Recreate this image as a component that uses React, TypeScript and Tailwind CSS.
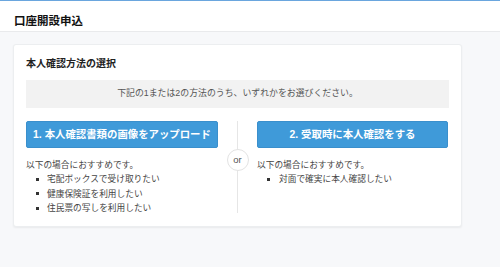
export default function App() {
  const left = ["宅配ボックスで受け取りたい", "健康保険証を利用したい", "住民票の写しを利用したい"]
  const right = ["対面で確実に本人確認したい"]

  return (
    <div
      className="min-h-[267px] bg-[#f7f8fa] text-[#333]"
      style={{ fontFamily: '"Helvetica Neue", "Liberation Sans", "Noto Sans CJK JP", sans-serif' }}
    >
      <div className="h-px bg-[#6aa6de]" />
      <header className="h-[31px] bg-white border-b border-[#e9eaec] pl-[14px] pt-[13px]">
        <h1 className="text-[11.5px] leading-[14px] font-bold text-[#111]">口座開設申込</h1>
      </header>

      <main className="pl-[13px] pt-[12px]">
        <section className="w-[449px] bg-white rounded-[3px] border border-[#eceef0] shadow-[0_1px_2px_rgba(0,0,0,0.06)] px-[12px] pt-[12px] pb-[11px]">
          <h2 className="text-[10px] leading-[14px] font-bold text-[#222] mb-[9px]">本人確認方法の選択</h2>

          <div className="h-[28px] bg-[#f2f2f2] flex items-center justify-center text-[8.9px] text-[#555]">
            下記の1または2の方法のうち、いずれかをお選びください。
          </div>

          <div className="mt-[13px] grid grid-cols-[192px_39px_191px]">
            <div>
              <button className="w-full h-[27px] rounded-[2px] bg-[#3f9ad9] border border-[#3a8fcc] text-white text-[10.4px] font-bold">
                1. 本人確認書類の画像をアップロード
              </button>
              <p className="mt-[10px] text-[8.7px] leading-[14px] text-[#444]">以下の場合におすすめです。</p>
              <ul className="text-[8.7px] leading-[14.3px] text-[#444]">
                {left.map(t => (
                  <li key={t} className="flex items-center">
                    <span className="w-[3px] h-[3px] bg-[#333] ml-[10px] mr-[8px]" />
                    {t}
                  </li>
                ))}
              </ul>
            </div>

            <div className="relative flex justify-center">
              <div className="w-px h-[92px] bg-[#e6e6e6]" />
              <div className="absolute left-1/2 top-[28px] -translate-x-1/2 w-[22px] h-[22px] rounded-full bg-white border border-[#e3e3e3] flex items-center justify-center text-[9.5px] text-[#555]">
                or
              </div>
            </div>

            <div>
              <button className="w-full h-[27px] rounded-[2px] bg-[#3f9ad9] border border-[#3a8fcc] text-white text-[10.4px] font-bold">
                2. 受取時に本人確認をする
              </button>
              <p className="mt-[10px] text-[8.7px] leading-[14px] text-[#444]">以下の場合におすすめです。</p>
              <ul className="text-[8.7px] leading-[14.3px] text-[#444]">
                {right.map(t => (
                  <li key={t} className="flex items-center">
                    <span className="w-[3px] h-[3px] bg-[#333] ml-[10px] mr-[9px]" />
                    {t}
                  </li>
                ))}
              </ul>
            </div>
          </div>
        </section>
      </main>
    </div>
  )
}
